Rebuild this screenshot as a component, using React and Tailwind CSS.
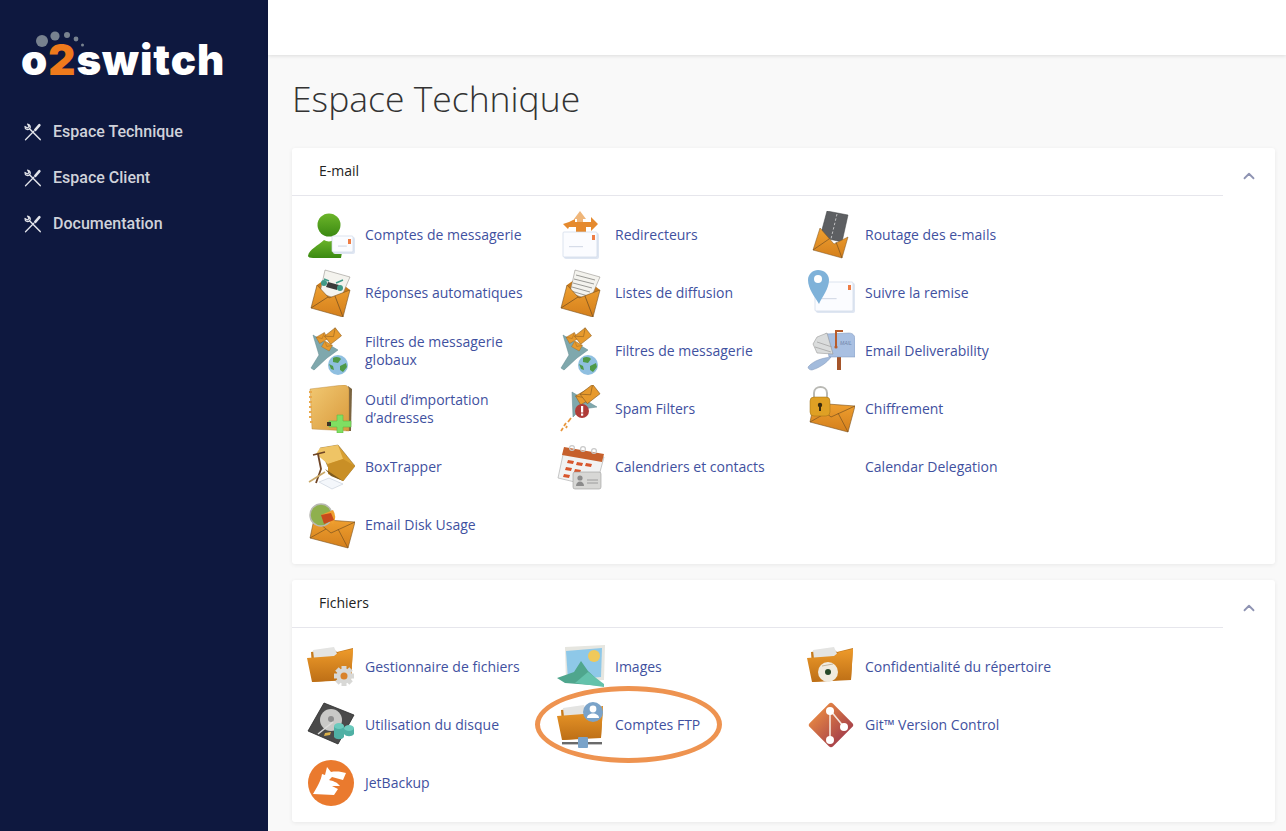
import React from "react";
import { ChevronUp } from "lucide-react";

function ToolsIcon() {
  return (
    <svg viewBox="0 0 18 18" className="w-[18px] h-[18px] shrink-0" fill="none" stroke="#e2e4ea" strokeLinecap="round" strokeLinejoin="round">
      <path d="M1 3.4C.9 6 3.5 7.600 5.600 5.700 7.100 4.200 6.200 1.500 3.500 1L5 3.500 3.500 5Z" strokeWidth="1.2" />
      <path d="M5.800 5.900 16.200 16.600" strokeWidth="1.5" />
      <path d="M1.500 16.700 9.800 8.300" strokeWidth="1.3" />
      <path d="M11.300 6.800 15.400 2.200" strokeWidth="2.600" />
    </svg>
  );
}

function Gradients() {
  return (
    <svg className="w-0 h-0 block">
      <defs>
        <linearGradient id="org" x1="0" y1="0" x2="0" y2="1">
          <stop offset="0" stopColor="#efa030" />
          <stop offset="1" stopColor="#d47f1c" />
        </linearGradient>
        <linearGradient id="fold" x1="0" y1="0" x2="0" y2="1">
          <stop offset="0" stopColor="#ee9a2a" />
          <stop offset="1" stopColor="#bd6f16" />
        </linearGradient>
        <linearGradient id="grn" x1="0" y1="0" x2="0" y2="1">
          <stop offset="0" stopColor="#6cb52a" />
          <stop offset="1" stopColor="#3b8a12" />
        </linearGradient>
        <linearGradient id="book" x1="0" y1="0" x2="1" y2="1">
          <stop offset="0" stopColor="#f1c872" />
          <stop offset="1" stopColor="#d99a3c" />
        </linearGradient>
        <linearGradient id="git" x1="0" y1="0" x2="1" y2="0">
          <stop offset="0" stopColor="#e08044" />
          <stop offset="1" stopColor="#a9444a" />
        </linearGradient>
      </defs>
    </svg>
  );
}

function Box({ children }) {
  return <svg viewBox="0 0 48 48" className="w-12 h-12 shrink-0">{children}</svg>;
}

// open envelope with something sticking out of it
function OpenEnvelope({ children }) {
  return (
    <>
      <path d="M10 16 24 6 43 21 36 34 8 30Z" fill="#c97a1a" />
      {children}
      <path d="M10 16 22 29 43 21 36 48 4 39Z" fill="url(#org)" stroke="#7a5220" strokeWidth=".6" strokeLinejoin="round" />
      <path d="M4 39 21 28M36 48 28 27" stroke="#7a5220" strokeWidth=".8" fill="none" />
    </>
  );
}

function ClosedEnvelope({ x = 0, y = 0 }) {
  return (
    <g transform={`translate(${x} ${y})`}>
      <path d="M7 18 48 21 41 47 3 37Z" fill="url(#org)" stroke="#7a5220" strokeWidth=".6" strokeLinejoin="round" />
      <path d="M7 18 24 32 48 21M3 37 19 28M41 47 31 28" stroke="#7a5220" strokeWidth=".7" fill="none" />
    </g>
  );
}

function WhiteEnvelope({ x, y, w, h }) {
  return (
    <g>
      <rect x={x + 1} y={y + 1} width={w} height={h} rx="2" fill="#dfe6f2" />
      <rect x={x} y={y} width={w - 1} height={h - 1} rx="1" fill="#fbfcff" stroke="#cfd8e8" strokeWidth=".7" />
      <rect x={x + w - 6} y={y + 3} width="3" height="5" fill="#ee7d45" />
      <rect x={x + 6} y={y + h / 2 + 1} width={w / 2.5} height="1.2" fill="#d6dce8" />
    </g>
  );
}

function MiniEnvelope({ x, y, r = -30, s = 1 }) {
  return (
    <g transform={`translate(${x} ${y}) rotate(${r}) scale(${s})`}>
      <rect x="-8" y="-6" width="16" height="12" fill="#e79a2d" stroke="#8a5c20" strokeWidth=".6" />
      <path d="M-8 -6 0 1 8 -6" fill="none" stroke="#8a5c20" strokeWidth=".6" />
    </g>
  );
}

function Folder({ children }) {
  return (
    <>
      <path d="M4 9 26 6 30 9 46 5 44 36 6 39Z" fill="#c67a1c" />
      <path d="M6 7 27 4 31 13 7 16Z" fill="#e4e4e2" />
      <path d="M0 15 27 13 32 9 46 6 44 37 5 39Z" fill="url(#fold)" />
      {children}
    </>
  );
}

function Gear({ cx, cy }) {
  const teeth = [0, 45, 90, 135];
  return (
    <g>
      {teeth.map((a) => (
        <rect key={a} x={cx - 10} y={cy - 2.5} width="20" height="5" fill="#d8d8d6" transform={`rotate(${a} ${cx} ${cy})`} />
      ))}
      <circle cx={cx} cy={cy} r="7.500" fill="#d8d8d6" />
      <circle cx={cx} cy={cy} r="3.500" fill="#d9822b" />
    </g>
  );
}

function Funnel() {
  return (
    <>
      <path d="M6 8 31 23 20 31 7 43 4 41 12 28Z" fill="#7fa8ad" stroke="#5f878c" strokeWidth=".5" strokeLinejoin="round" />
      <MiniEnvelope x={15} y={11} s={0.6} />
      <MiniEnvelope x={26} y={9} r={-38} s={0.85} />
      <MiniEnvelope x={20} y={19} r={30} s={0.55} />
      <circle cx="31" cy="38" r="10" fill="#8fbfe0" />
      <path d="M26 31c3-2 7-1 8 1l-3 4-5-1ZM33 39l6-3 1 4-4 5-3-2ZM22 37l4 2 1 4-3-1Z" fill="#4f9a48" />
    </>
  );
}

const icons = {
  user: (
    <Box>
      <circle cx="22" cy="14" r="11.500" fill="url(#grn)" />
      <path d="M1 45C2 38 11 35 17 29 20 31 25 31 28 28L36 36 34 47 6 47C3 47 1 46 1 45Z" fill="url(#grn)" />
      <WhiteEnvelope x={25} y={25} w={22} h={17} />
    </Box>
  ),
  reply: (
    <Box>
      <OpenEnvelope>
        <path d="M18 1 43 8 33 31 13 24Z" fill="#f4f3ee" stroke="#85817a" strokeWidth=".5" />
        <path d="M21 13 32 16 30 21 19 18Z" fill="#3b3b3b" />
        <circle cx="17" cy="14" r="3" fill="#3f9a88" />
        <circle cx="33" cy="19" r="3" fill="#3f9a88" />
        <path d="M17 10 22 12M29 14 36 11" stroke="#3f9a88" strokeWidth="1.400" />
      </OpenEnvelope>
    </Box>
  ),
  funnel: <Box><Funnel /></Box>,
  book: (
    <Box>
      <path d="M41 1 45 4 44 46 39 46Z" fill="#7a6440" />
      <path d="M3 4 36 0C40 0 42 2 42 5L42 46 5 44Z" fill="url(#book)" stroke="#b28237" strokeWidth=".4" />
      <path d="M2 7h3M2 12h3M2 17h3M2 22h3M2 27h3M2 32h3M3 37h3" stroke="#e8a84a" strokeWidth="2" />
      <path d="M30 30h6v6h8v6h-8v6h-6v-6h-8v-6h8Z" fill="#7fdf62" stroke="#5fb948" strokeWidth=".6" />
      <rect x="20" y="37" width="4" height="4" fill="#3d3528" />
    </Box>
  ),
  trap: (
    <Box>
      <path d="M13 5 31 2 48 23 36 38 21 24Z" fill="#d9a032" stroke="#7a5a20" strokeWidth=".5" strokeLinejoin="round" />
      <path d="M13 5 31 2 36 16 21 21 9 11Z" fill="#efc465" />
      <path d="M21 21 36 16 48 23 36 38 21 31Z" fill="#c98f26" />
      <path d="M18 26 36 38 24 33Z" fill="#7d5a1e" />
      <path d="M6 12 18 9M11 11 14 26 9 40" stroke="#6f4526" strokeWidth="1.800" fill="none" />
      <path d="M2 39 18 29" stroke="#c9a867" strokeWidth="1.600" />
      <path d="M12 39 22 35 36 41 25 46Z" fill="#f4f7fb" stroke="#b9c3d0" strokeWidth=".5" />
    </Box>
  ),
  disk: (
    <Box>
      <ClosedEnvelope />
      <circle cx="14" cy="14" r="11" fill="#8fb04e" stroke="#b9b9b4" strokeWidth="1.500" />
      <path d="M14 14 26 9A13 13 0 0 1 26 23Z" fill="#efa030" />
      <path d="M14 14 24 12 27 19 17 23Z" fill="#c84a1c" />
    </Box>
  ),
  redirect: (
    <Box>
      <path d="M23 0 29 8 26 8 26 22 20 22 20 8 17 8Z" fill="#efb67a" />
      <path d="M12 11 18 8 18 11 24 11 24 22 19 22 19 16 12 16 11 18 6 13Z" fill="#e58a2e" />
      <path d="M34 6 41 13 34 20 34 16 29 16 29 22 24 22 24 11 34 11Z" fill="#e58a2e" />
      <WhiteEnvelope x={6} y={21} w={35} h={26} />
    </Box>
  ),
  list: (
    <Box>
      <OpenEnvelope>
        <path d="M18 1 43 8 33 31 13 24Z" fill="#f4f3ee" stroke="#85817a" strokeWidth=".5" />
        <path d="M19 6 38 11M17 10 37 15M16 14 35 19M15 18 33 23M14 22 31 27" stroke="#9a9a96" strokeWidth="1" />
      </OpenEnvelope>
    </Box>
  ),
  spam: (
    <Box>
      <path d="M15 7 40 22 26 24 21 27 16 32Z" fill="#7fa8ad" stroke="#5f878c" strokeWidth=".5" />
      <MiniEnvelope x={27} y={12} s={0.85} />
      <MiniEnvelope x={33} y={9} r={-38} />
      <path d="M14 33 11 37M9 38 7 41M6 43 4 46M10 41 9 43" stroke="#e8963c" strokeWidth="1.800" />
      <circle cx="25" cy="26" r="7" fill="#b03c38" />
      <rect x="24" y="21" width="2.200" height="6.500" fill="#fff" />
      <rect x="24" y="28.500" width="2.200" height="2.200" fill="#fff" />
    </Box>
  ),
  calendar: (
    <Box>
      <path d="M7 7 47 14 39 44 1 35Z" fill="#f1f2f2" stroke="#a5a5a5" strokeWidth=".6" />
      <path d="M7 4 47 11 45 19 5 12Z" fill="#c6602c" />
      <circle cx="15" cy="5" r="2.400" fill="none" stroke="#c9c9c9" strokeWidth="1.200" />
      <circle cx="26" cy="6" r="2.400" fill="none" stroke="#c9c9c9" strokeWidth="1.200" />
      <circle cx="37" cy="8" r="2.400" fill="none" stroke="#c9c9c9" strokeWidth="1.200" />
      <path d="M11 17l6 1-1 3-6-1ZM20 19l6 1-1 3-6-1ZM29 20l6 1-1 3-6-1ZM9 24l6 1-1 3-6-1ZM18 26l6 1-1 3-6-1ZM7 31l6 1-1 3-6-1Z" fill="#d8562c" />
      <rect x="16" y="29" width="28" height="17" rx="2" fill="#d7d7d5" stroke="#9a9a9a" strokeWidth=".6" />
      <circle cx="23" cy="35" r="2.600" fill="#8b8b8b" />
      <path d="M19 43c0-6 8-6 8 0Z" fill="#8b8b8b" />
      <path d="M30 37h11M30 40h11" stroke="#9c9c9c" strokeWidth="1" />
    </Box>
  ),
  route: (
    <Box>
      <path d="M20 0 41 4 35 31 13 26Z" fill="#5d5f62" stroke="#3f4042" strokeWidth=".5" />
      <path d="M30 3 24 28" stroke="#d8d8d8" strokeWidth=".8" strokeDasharray="2.500 2" />
      <path d="M13 17 27 33 41 26 35 47 6 39Z" fill="url(#org)" stroke="#7a5220" strokeWidth=".5" strokeLinejoin="round" />
      <path d="M6 39 22 28M35 47 29 31" stroke="#7a5220" strokeWidth=".7" />
    </Box>
  ),
  track: (
    <Box>
      <WhiteEnvelope x={8} y={13} w={39} h={30} />
      <path d="M12 35C8 28 1 20 1 11 1 5 6 1 11 1 17 1 22 5 22 11 22 20 15 28 12 35Z" fill="#7fb2d9" />
      <circle cx="11" cy="10" r="4" fill="#fff" />
    </Box>
  ),
  mailbox: (
    <Box>
      <path d="M30 30h4v13h-4Z" fill="#a5552a" />
      <path d="M18 7 42 6C46 6 48 9 48 12L48 30 22 30Z" fill="#a9c0e2" stroke="#7f95b8" strokeWidth=".5" />
      <path d="M10 10 20 6 26 27 10 26 6 17Z" fill="#dadcdc" stroke="#8a8a8a" strokeWidth=".5" />
      <path d="M10 15 25 20M8 20 24 25" stroke="#a5a5a5" strokeWidth=".8" />
      <path d="M1 40C7 33 16 31 24 30 20 36 12 41 5 43 3 43 1 42 1 40Z" fill="#a3bbdc" stroke="#7f95b8" strokeWidth=".5" />
      <path d="M29 20V4H36" stroke="#b85c2c" strokeWidth="2" fill="none" />
      <circle cx="29" cy="20" r="1.600" fill="#b85c2c" />
      <text x="33" y="18" fontSize="5" fill="#6f84a8" fontFamily="Liberation Sans, sans-serif" fontStyle="italic">MAIL</text>
    </Box>
  ),
  lock: (
    <Box>
      <ClosedEnvelope />
      <path d="M7 14V8C7 0 20 0 20 8V14" fill="none" stroke="#b9b9b4" strokeWidth="2" />
      <rect x="3" y="12" width="20" height="19" rx="4" fill="#dfa024" stroke="#9a6d16" strokeWidth=".5" />
      <circle cx="13" cy="20" r="2.200" fill="#3a2c10" />
      <rect x="12" y="21" width="2" height="5" fill="#3a2c10" />
    </Box>
  ),
  files: (
    <Box>
      <Folder>
        <Gear cx={37} cy={33} />
      </Folder>
    </Box>
  ),
  hdd: (
    <Box>
      <path d="M17 2 47 14 31 43 1 30Z" fill="#4a4a4a" stroke="#2a2a2a" strokeWidth=".8" strokeLinejoin="round" />
      <circle cx="24" cy="19" r="11" fill="#c9c9c7" />
      <circle cx="24" cy="18" r="3" fill="#8d8d8d" />
      <path d="M26 21 11 33" stroke="#dcdcda" strokeWidth="1.600" />
      <path d="M18 32l6-1-1 3-6 1Z" fill="#dcb24a" />
      <path d="M27 25h10v11c-2 3-8 3-10 0Z" fill="#4fb0a4" />
      <ellipse cx="32" cy="25" rx="5" ry="3" fill="#6ccabd" />
      <path d="M37 27h10v6c-2 3-8 3-10 0Z" fill="#4fb0a4" />
      <ellipse cx="42" cy="27" rx="5" ry="3" fill="#6ccabd" />
    </Box>
  ),
  jet: (
    <Box>
      <circle cx="24" cy="24" r="23" fill="#ea7a2e" />
      <path d="M6 35C10 28 14 22 15 15L18 16 20 8 24 13C30 12 35 13 39 14L36 21 25 18 22 21C26 22 30 23 33 27L25 27 31 30 27 36Z" fill="#fff" />
    </Box>
  ),
  images: (
    <Box>
      <path d="M8 4 48 2 47 37 9 40Z" fill="#e6e6e0" />
      <path d="M9 8 45 5 44 34 11 37Z" fill="#8ec8e8" />
      <circle cx="37" cy="13" r="6" fill="#f0c95a" />
      <path d="M0 35 17 29 24 18 31 28 47 43 8 40Z" fill="#4fa68d" />
      <path d="M18 40 31 29 47 41 47 44Z" fill="#64c2ab" />
    </Box>
  ),
  ftp: (
    <Box>
      <Folder>
        <rect x="5" y="41" width="40" height="2.400" fill="#6a6a6a" />
        <rect x="21" y="36" width="10" height="11" rx="1" fill="#7aa3c9" />
        <circle cx="36" cy="11" r="10" fill="#7aa3c9" />
        <circle cx="36" cy="8" r="3.400" fill="#fff" />
        <path d="M30 17c0-6 12-6 12 0Z" fill="#fff" />
      </Folder>
    </Box>
  ),
  privacy: (
    <Box>
      <Folder>
        <circle cx="21" cy="29" r="10" fill="#f0ebe0" />
        <circle cx="21" cy="29" r="3" fill="#27492a" />
        <path d="M15 23 26 21" stroke="#b5a68c" strokeWidth=".8" />
      </Folder>
    </Box>
  ),
  git: (
    <Box>
      <rect x="7.500" y="7.500" width="33" height="33" rx="3" fill="url(#git)" transform="rotate(45 24 24)" />
      <path d="M23 9V39M23 9 37 26" stroke="#f5e6dd" strokeWidth="1.600" fill="none" />
      <circle cx="23" cy="10" r="4" fill="#fff" />
      <circle cx="37" cy="26" r="4" fill="#fff" />
      <circle cx="23" cy="39" r="4" fill="#fff" />
    </Box>
  ),
};

const emailItems = [
  ["user", "Comptes de messagerie"],
  ["redirect", "Redirecteurs"],
  ["route", "Routage des e-mails"],
  ["reply", "Réponses automatiques"],
  ["list", "Listes de diffusion"],
  ["track", "Suivre la remise"],
  ["funnel", "Filtres de messagerie\nglobaux"],
  ["funnel", "Filtres de messagerie"],
  ["mailbox", "Email Deliverability"],
  ["book", "Outil d’importation\nd’adresses"],
  ["spam", "Spam Filters"],
  ["lock", "Chiffrement"],
  ["trap", "BoxTrapper"],
  ["calendar", "Calendriers et contacts"],
  [null, "Calendar Delegation"],
  ["disk", "Email Disk Usage"],
];

const fileItems = [
  ["files", "Gestionnaire de fichiers"],
  ["images", "Images"],
  ["privacy", "Confidentialité du répertoire"],
  ["hdd", "Utilisation du disque"],
  ["ftp", "Comptes FTP", true],
  ["git", "Git™ Version Control"],
  ["jet", "JetBackup"],
];

function Section({ title, items }) {
  return (
    <section className="bg-white rounded-[3px] shadow-[0_1px_4px_rgba(0,0,0,0.07)]">
      <div className="flex">
        <div className="flex-1 h-[48px] border-b border-[#e6e6ec] pl-[27px] pb-[2px] flex items-center text-[14px] text-[#222]">
          {title}
        </div>
        <div className="w-[52px] flex justify-center pt-[19px]">
          <ChevronUp className="w-[18px] h-[18px] text-[#8f94b3]" strokeWidth={2.4} />
        </div>
      </div>
      <div className="grid grid-cols-[250px_250px_250px] pl-[15px] py-[10px]">
        {items.map(([icon, label, circled]) => (
          <a key={label} className="relative h-[58px] flex items-center gap-[10px] text-[14px] leading-[18px] text-[#3f51a0] whitespace-pre">
            {icon ? icons[icon] : <span className="w-12 h-12 shrink-0" />}
            <span>{label}</span>
            {circled && (
              <span className="absolute left-[-22px] top-[-10px] w-[187px] h-[77px] rounded-[50%] border-[5px] border-[#ee9350]" />
            )}
          </a>
        ))}
      </div>
    </section>
  );
}

export default function App() {
  return (
    <div className="h-screen overflow-hidden flex font-['Open_Sans',sans-serif] bg-[#f9f9f9]">
      <Gradients />
      <aside className="w-[268px] shrink-0 bg-[#0e183f]">
        <div className="relative h-[109px] pl-[21px] pt-[36px]">
          <svg className="absolute left-[30px] top-[28px] w-[60px] h-[24px]" viewBox="0 0 60 24">
            <circle cx="12" cy="13" r="6" fill="#78828f" />
            <circle cx="25" cy="8" r="4.600" fill="#78828f" />
            <circle cx="37" cy="7" r="3" fill="#78828f" />
            <circle cx="46" cy="11" r="2.400" fill="#78828f" />
            <circle cx="52.500" cy="17" r="1.500" fill="#78828f" />
          </svg>
          <div className="font-['Inter',sans-serif] font-black text-[42px] leading-[48px] tracking-[1px] text-white">
            o<span className="text-[#ee7a1c]">2</span>switch
          </div>
        </div>
        <nav className="flex flex-col font-['Roboto',sans-serif] font-medium text-[16px] text-[#d0d2da]">
          {["Espace Technique", "Espace Client", "Documentation"].map((item) => (
            <a key={item} className="h-[46px] pl-[24px] flex items-center gap-[11px]">
              <ToolsIcon />
              {item}
            </a>
          ))}
        </nav>
      </aside>
      <div className="flex-1 flex flex-col min-w-0">
        <header className="h-[55px] shrink-0 bg-white shadow-[0_1px_4px_rgba(0,0,0,0.12)]" />
        <main className="pl-[24px] pr-[11px]">
          <h1 className="h-[88px] mb-[5px] flex items-center text-[35.5px] font-light text-[#333]">Espace Technique</h1>
          <div className="flex flex-col gap-[16px]">
            <Section title="E-mail" items={emailItems} />
            <Section title="Fichiers" items={fileItems} />
          </div>
        </main>
      </div>
    </div>
  );
}
